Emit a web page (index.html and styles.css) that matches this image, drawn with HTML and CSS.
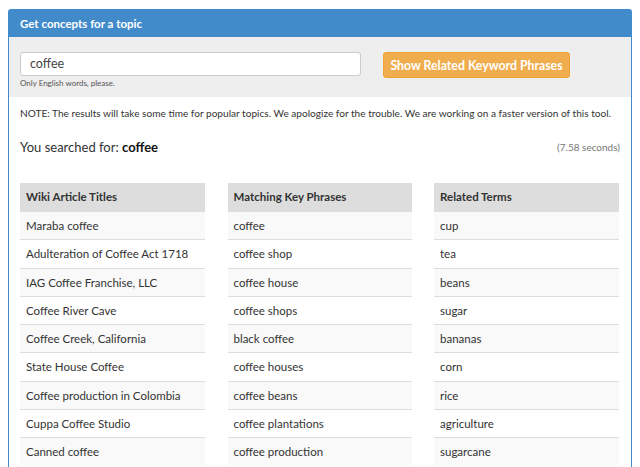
FILE: index.html
```html
<!DOCTYPE html>
<html>
<head>
<meta charset="utf-8">
<link rel="stylesheet" href="styles.css">
</head>
<body>
<div class="panel">
  <div class="panel-heading">Get concepts for a topic</div>
  <div class="form-area">
    <div class="field">
      <div class="input">coffee</div>
      <div class="hint">Only English words, please.</div>
    </div>
    <button class="btn">Show Related Keyword Phrases</button>
  </div>
  <div class="results">
    <p class="note">NOTE: The results will take some time for popular topics. We apologize for the trouble. We are working on a faster version of this tool.</p>
    <div class="searched">
      <span class="query">You searched for: <b>coffee</b></span>
      <span class="time">(7.58 seconds)</span>
    </div>
    <div class="tables">
      <div class="table">
        <div class="th">Wiki Article Titles</div>
        <div class="td">Maraba coffee</div>
        <div class="td">Adulteration of Coffee Act 1718</div>
        <div class="td">IAG Coffee Franchise, LLC</div>
        <div class="td">Coffee River Cave</div>
        <div class="td">Coffee Creek, California</div>
        <div class="td">State House Coffee</div>
        <div class="td">Coffee production in Colombia</div>
        <div class="td">Cuppa Coffee Studio</div>
        <div class="td">Canned coffee</div>
      </div>
      <div class="table">
        <div class="th">Matching Key Phrases</div>
        <div class="td">coffee</div>
        <div class="td">coffee shop</div>
        <div class="td">coffee house</div>
        <div class="td">coffee shops</div>
        <div class="td">black coffee</div>
        <div class="td">coffee houses</div>
        <div class="td">coffee beans</div>
        <div class="td">coffee plantations</div>
        <div class="td">coffee production</div>
      </div>
      <div class="table">
        <div class="th">Related Terms</div>
        <div class="td">cup</div>
        <div class="td">tea</div>
        <div class="td">beans</div>
        <div class="td">sugar</div>
        <div class="td">bananas</div>
        <div class="td">corn</div>
        <div class="td">rice</div>
        <div class="td">agriculture</div>
        <div class="td">sugarcane</div>
      </div>
    </div>
  </div>
</div>
</body>
</html>
```

FILE: styles.css
```css
html, body {
  margin: 0;
  padding: 0;
  background: #fff;
  font-family: Lato, "Open Sans", "Liberation Sans", sans-serif;
  color: #333;
  overflow: hidden;
}
.panel {
  margin: 9px 8px 0 8px;
  border: 1px solid #428bca;
  border-bottom: none;
  border-radius: 3px 3px 0 0;
  height: 470px;
}
.panel-heading {
  background: #428bca;
  color: #fff;
  font-weight: bold;
  font-size: 11.5px;
  height: 27px;
  line-height: 27px;
  padding: 0 11px;
}
.form-area {
  background: #eee;
  padding: 15px 11px 0 11px;
  height: 45px;
  display: flex;
  align-items: flex-start;
  gap: 22px;
}
.field {
  width: 341px;
}
.input {
  box-sizing: border-box;
  height: 24px;
  background: #fff;
  border: 1px solid #ccc;
  border-radius: 3px;
  font-size: 12.5px;
  line-height: 22px;
  padding: 0 9px;
  color: #444;
}
.hint {
  font-size: 8px;
  color: #555;
  margin-top: 1px;
  line-height: 12px;
}
.btn {
  height: 26px;
  width: 187px;
  padding: 0;
  background: #f0ad4e;
  border: 1px solid #eea236;
  border-radius: 3px;
  color: #fff;
  font-family: inherit;
  font-weight: bold;
  font-size: 12.3px;
}
.results {
  padding: 0 11px 0 11px;
}
.note {
  margin: 0;
  padding-top: 9px;
  font-size: 10.1px;
  line-height: 14px;
  color: #333;
}
.searched {
  display: flex;
  justify-content: space-between;
  align-items: center;
  margin-top: 16px;
  height: 22px;
}
.query {
  font-size: 13px;
  color: #333;
}
.query b {
  color: #111;
}
.time {
  font-size: 10px;
  color: #777;
}
.tables {
  margin-top: 25px;
  display: grid;
  grid-template-columns: 185px 184px 185px;
  column-gap: 22.5px;
  width: 600px;
}
.th {
  background: #ddd;
  font-weight: bold;
  font-size: 11.5px;
  height: 28px;
  line-height: 28px;
  padding: 0 6px;
  color: #333;
}
.td {
  font-size: 11.5px;
  line-height: 15.25px;
  padding: 6px;
  border-top: 1px solid #ddd;
  color: #333;
  white-space: nowrap;
}
.td:nth-child(even) {
  background: #f9f9f9;
}
```
